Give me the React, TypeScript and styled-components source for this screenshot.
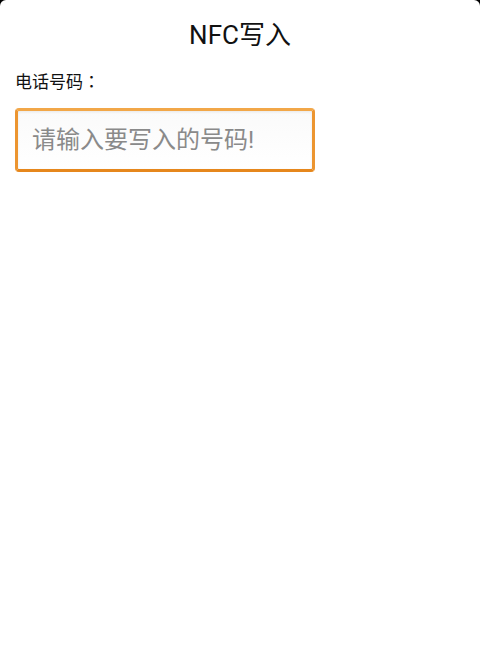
import styled, { createGlobalStyle } from 'styled-components'

const GlobalStyle = createGlobalStyle`
  html, body {
    margin: 0;
    padding: 0;
    background: #000;
  }
  body {
    font-family: Roboto, 'Noto Sans CJK SC', sans-serif;
  }
`

const Screen = styled.div`
  width: 480px;
  height: 667px;
  background: #fff;
  border-radius: 6px 6px 0 0;
  box-sizing: border-box;
  padding: 0 15px;
  display: flex;
  flex-direction: column;
`

const Title = styled.h1`
  margin: 0;
  height: 64px;
  display: flex;
  align-items: center;
  justify-content: center;
  font-size: 26px;
  font-weight: 400;
  color: #111;
`

const Label = styled.label`
  margin-top: 4px;
  font-family: Roboto, 'Noto Sans CJK TC', sans-serif;
  font-size: 17px;
  color: #111;
  line-height: 28px;
`

const PhoneInput = styled.input`
  margin-top: 12px;
  width: 300px;
  height: 64px;
  box-sizing: border-box;
  border: 3px solid #ec9530;
  border-top-color: #f2a748;
  border-bottom-color: #e6871c;
  border-radius: 4px;
  padding: 0 14px;
  font-family: Roboto, 'Noto Sans CJK SC', sans-serif;
  font-size: 24px;
  color: #222;
  background: linear-gradient(#fafafa, #ffffff);
  box-shadow: inset 0 1px 3px rgba(0, 0, 0, 0.08);
  outline: none;

  &::placeholder {
    color: #8a8a8a;
  }
`

export default function App() {
  return (
    <>
      <GlobalStyle />
      <Screen>
        <Title>NFC写入</Title>
        <Label htmlFor="phone">电话号码：</Label>
        <PhoneInput id="phone" type="tel" placeholder="请输入要写入的号码!" />
      </Screen>
    </>
  )
}
